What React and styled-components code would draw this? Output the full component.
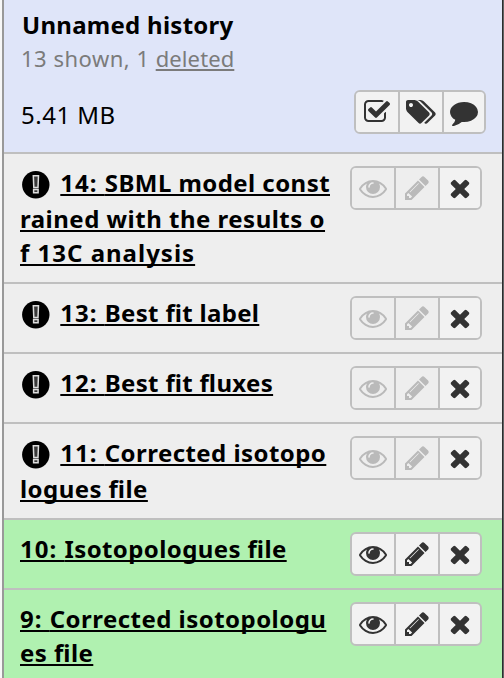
import React from "react";
import styled, { createGlobalStyle } from "styled-components";

const GlobalStyle = createGlobalStyle`
  * { box-sizing: border-box; }
  body { margin: 0; background: #fff; }
`;

const Panel = styled.main`
  width: 504px;
  height: 678px;
  overflow: hidden;
  margin: 0;
  padding-left: 2px;
  display: flex;
  background: #f8f8f8;
  font-family: "Noto Sans", "Open Sans", sans-serif;
  color: #000;
`;

const History = styled.section`
  flex: 1;
  min-width: 0;
  border-left: 2px solid #999;
`;

const Edge = styled.div`
  width: 2px;
  border-left: 1px solid #2b2c2e;
  background: #626365;
`;

const Header = styled.header`
  height: 154px;
  padding: 8px 16px 0 17px;
  background: #dfe5f9;
  border-bottom: 2px solid #bfbfbf;
`;

const HistoryName = styled.h1`
  margin: 0 0 0 1px;
  font-size: 24px;
  line-height: 34px;
  font-weight: 700;
  letter-spacing: 0.27px;
`;

const Shown = styled.div`
  font-size: 22px;
  line-height: 32px;
  letter-spacing: 0.5px;
  color: #7b7b7b;
`;

const Deleted = styled.a`
  letter-spacing: 0.1px;
  text-decoration: underline 2px;
  text-underline-offset: 2px;
  text-decoration-skip-ink: none;
`;

const HeaderBottom = styled.div`
  display: flex;
  justify-content: space-between;
  align-items: flex-start;
  margin-top: 16px;
`;

const Size = styled.span`
  margin-top: 8px;
  font-size: 24px;
  line-height: 34px;
  letter-spacing: 0.5px;
`;

const Row = styled.article`
  display: flex;
  justify-content: space-between;
  align-items: flex-start;
  padding: 12px 20px 12px 16px;
  border-bottom: 2px solid #bfbfbf;
  background: ${(p) => (p.$ok ? "#b0f1b0" : "#eee")};
`;

const Title = styled.div`
  font-size: 24px;
  font-weight: 700;
  line-height: 34px;
  white-space: nowrap;
`;

const Line = styled.div`
  display: flex;
  align-items: flex-start;
  height: ${(p) => (p.$icon ? 36 : 34)}px;
`;

const Name = styled.a`
  letter-spacing: ${(p) => p.$spacing}px;
  font-feature-settings: "liga" 1;
  text-decoration: underline 2px;
  text-underline-offset: 2px;
  text-decoration-skip-ink: none;
`;

const Hid = styled.span`
  letter-spacing: 1px;
`;

const Bang = styled.svg`
  width: 28px;
  height: 28px;
  margin: 5px 10.3px 0 2px;
  flex: none;
`;

const Buttons = styled.div`
  display: flex;
  flex: none;
  width: 132px;
  height: 44px;
  border: 2px solid #bfbfbf;
  border-radius: 6px;
  overflow: hidden;
`;

const IconButton = styled.button`
  display: flex;
  align-items: flex-start;
  width: 44px;
  height: 40px;
  padding: 6px 0 0 ${(p) => p.$pad}px;
  border: 0;
  border-right: 2px solid #bfbfbf;
  background: ${(p) => (p.$disabled ? "#eee" : "#f2f2f2")};
  color: ${(p) => (p.$disabled ? "#bababa" : "#333")};
  &:last-child { width: 40px; border-right: 0; }
`;

const Glyph = styled.svg`
  display: block;
  flex: none;
  width: 28px;
  height: 28px;
  fill: currentColor;
  overflow: visible;
`;

const icons = {
  eye: "M1664 960q-152-236-381-353 61 104 61 225 0 185-131.5 316.5t-316.5 131.5-316.5-131.5-131.5-316.5q0-121 61-225-229 117-381 353 133 205 333.5 326.5t434.5 121.5 434.5-121.5 333.5-326.5zm-720-384q0-20-14-34t-34-14q-125 0-214.5 89.5t-89.5 214.5q0 20 14 34t34 14 34-14 14-34q0-86 61-147t147-61q20 0 34-14t14-34zm848 384q0 34-20 69-140 230-376.5 368.5t-499.5 138.5-499.5-139-376.5-368q-20-35-20-69t20-69q140-229 376.5-368t499.5-139 499.5 139 376.5 368q20 35 20 69z",
  pencil: "M491 1536l91-91-235-235-91 91v107h128v128h107zm523-928q0-22-22-22-10 0-17 7l-542 542q-7 7-7 17 0 22 22 22 10 0 17-7l542-542q7-7 7-17zm-54-192l416 416-832 832h-416v-416zm683 96q0 53-37 90l-166 166-416-416 166-165q36-38 90-38 53 0 91 38l235 234q37 39 37 91z",
  times: "M1490 1322q0 40-28 68l-136 136q-28 28-68 28t-68-28l-294-294-294 294q-28 28-68 28t-68-28l-136-136q-28-28-28-68t28-68l294-294-294-294q-28-28-28-68t28-68l136-136q28-28 68-28t68 28l294 294 294-294q28-28 68-28t68 28l136 136q28 28 28 68t-28 68l-294 294 294 294q28 28 28 68z",
  check: "M1472 930v318q0 119-84.5 203.5t-203.5 84.5h-832q-119 0-203.5-84.5t-84.5-203.5v-832q0-119 84.5-203.5t203.5-84.5h832q63 0 117 25 15 7 18 23 3 17-9 29l-49 49q-10 10-23 10-3 0-9-2-23-6-45-6h-832q-66 0-113 47t-47 113v832q0 66 47 113t113 47h832q66 0 113-47t47-113v-254q0-13 9-22l64-64q10-10 23-10 6 0 12 3 20 8 20 29zm231-489l-814 814q-24 24-57 24t-57-24l-430-430q-24-24-24-57t24-57l110-110q24-24 57-24t57 24l263 263 647-647q24-24 57-24t57 24l110 110q24 24 24 57t-24 57z",
  tags: "M384 448q0-53-37.5-90.5t-90.5-37.5-90.5 37.5-37.5 90.5 37.5 90.5 90.5 37.5 90.5-37.5 37.5-90.5zm1067 576q0 53-37 90l-491 492q-39 37-91 37-53 0-90-37l-715-716q-38-37-64.5-101t-26.5-117v-416q0-52 38-90t90-38h416q53 0 117 26.5t102 64.5l715 714q37 39 37 91zm384 0q0 53-37 90l-491 492q-39 37-91 37-36 0-59-14t-53-45l470-470q37-37 37-90 0-52-37-91l-715-714q-38-38-102-64.5t-117-26.5h224q53 0 117 26.5t102 64.5l715 714q37 39 37 91z",
  comment: "M1792 896q0 174-120 321.5t-326 233-450 85.5q-70 0-145-8-198 175-460 242-49 14-114 22-17 2-30.5-9t-17.5-29v-1q-3-4-.5-12t2-10 4.5-9.5l6-9 7-8.5 8-9q7-8 31-34.5t34.5-38 31-39.5 32.5-51 27-59 26-76q-157-89-247.5-220t-90.5-281q0-130 71-248.5t191-204.5 286-136.5 348-50.5q244 0 450 85.5t326 233 120 321.5z",
};

function Action({ icon, label, disabled, pad = 6 }) {
  return (
    <IconButton $disabled={disabled} $pad={pad} aria-label={label}>
      <Glyph viewBox="0 0 1792 1792"><path d={icons[icon]} /></Glyph>
    </IconButton>
  );
}

const datasets = [
  { hid: "14: ", state: "error", lines: [["SBML model const", 0.44], ["rained with the results o", 0.49], ["f 13C analysis", 1]] },
  { hid: "13: ", state: "error", lines: [["Best fit label", 0.33]] },
  { hid: "12: ", state: "error", lines: [["Best fit fluxes", 0.33]] },
  { hid: "11: ", state: "error", lines: [["Corrected isotopo", 0.44], ["logues file", 0.44]] },
  { hid: "10: ", state: "ok", lines: [["Isotopologues file", 0.4]] },
  { hid: "9: ", state: "ok", lines: [["Corrected isotopologu", 0.46], ["es file", 0.46]] },
];

function Dataset({ hid, state, lines }) {
  const ok = state === "ok";
  return (
    <Row $ok={ok}>
      <Title>
        {lines.map(([text, spacing], i) => {
          const icon = !ok && i === 0;
          return (
            <Line key={text} $icon={icon}>
              {icon && (
                <Bang viewBox="0 0 28 28">
                  <circle cx="13.8" cy="13.7" r="13.7" />
                  <path d="M11.3 4.8h5.2l-.5 11.6h-4.2zM11.6 18.6h4.5v3.2h-4.5z" fill="#3a3a3a" stroke="#dedede" strokeWidth="1.5" />
                </Bang>
              )}
              <Name $spacing={spacing}>
                {i === 0 && <Hid>{hid}</Hid>}
                {text}
              </Name>
            </Line>
          );
        })}
      </Title>
      <Buttons>
        <Action icon="eye" label="View data" disabled={!ok} pad={7} />
        <Action icon="pencil" label="Edit attributes" disabled={!ok} pad={7} />
        <Action icon="times" label="Delete" />
      </Buttons>
    </Row>
  );
}

export default function App() {
  return (
    <>
      <GlobalStyle />
      <Panel>
        <History>
          <Header>
            <HistoryName>Unnamed history</HistoryName>
            <Shown>13 shown, 1 <Deleted>deleted</Deleted></Shown>
            <HeaderBottom>
              <Size>5.41 MB</Size>
              <Buttons>
                <Action icon="check" label="Select datasets" pad={7} />
                <Action icon="tags" label="Edit tags" pad={7} />
                <Action icon="comment" label="Edit annotation" />
              </Buttons>
            </HeaderBottom>
          </Header>
          {datasets.map((d) => <Dataset key={d.hid} {...d} />)}
        </History>
        <Edge />
      </Panel>
    </>
  );
}
